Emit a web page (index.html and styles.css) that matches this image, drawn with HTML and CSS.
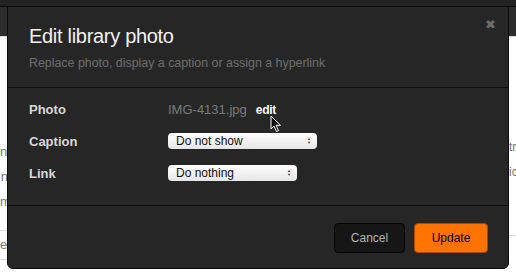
FILE: index.html
```html
<!DOCTYPE html>
<html lang="en">
<head>
    <meta charset="UTF-8">
    <meta name="viewport" content="width=device-width, initial-scale=1.0">
    <title>Edit library photo</title>
    <link rel="stylesheet" href="styles.css">
</head>
<body>
    <div class="topbar"></div>
    <div class="page">
        <div class="navbar"></div>
        <div class="content">
            <div class="side left">
                <div class="line">ne</div>
                <div class="line">n</div>
                <div class="line">m</div>
                <div class="row-sep">e0</div>
            </div>
            <div class="side right">
                <div class="line">tr</div>
                <div class="line">ic</div>
                <div class="row-sep"></div>
            </div>
        </div>
    </div>

    <div class="modal">
        <div class="modal-header">
            <span class="close">&#10006;</span>
            <div class="modal-title">Edit library photo</div>
            <div class="modal-sub">Replace photo, display a caption or assign a hyperlink</div>
        </div>

        <div class="modal-body">
            <div class="field">
                <div class="label">Photo</div>
                <div class="value">
                    <span class="filename">IMG-4131.jpg</span><span class="edit-link">edit</span>
                </div>
            </div>
            <div class="field">
                <div class="label">Caption</div>
                <div class="value">
                    <div class="select caption-select">
                        <span>Do not show</span>
                        <span class="arrows">&#9650;<br>&#9660;</span>
                    </div>
                </div>
            </div>
            <div class="field">
                <div class="label">Link</div>
                <div class="value">
                    <div class="select link-select">
                        <span>Do nothing</span>
                        <span class="arrows">&#9650;<br>&#9660;</span>
                    </div>
                </div>
            </div>
        </div>

        <div class="modal-footer">
            <button class="btn btn-cancel">Cancel</button>
            <button class="btn btn-update">Update</button>
        </div>

        <svg class="cursor" width="12" height="18" viewBox="0 0 12 18">
            <path d="M1 1 L1 14 L4 11 L6.5 16.5 L8.5 15.6 L6.2 10.3 L10.5 10.3 Z" fill="#111" stroke="#fff" stroke-width="1"/>
        </svg>
    </div>
</body>
</html>
```

FILE: styles.css
```css
body {
    margin: 0;
    font-family: 'Liberation Sans', Arial, sans-serif;
    background: #fff;
    width: 516px;
    height: 279px;
    overflow: hidden;
    position: relative;
}
.topbar {
    height: 6px;
    background: #222;
    border-bottom: 1px solid #0a0a0a;
}
.navbar {
    height: 29px;
    background: #2c2c2c;
    border-bottom: 1px solid #ddd;
}
.content {
    display: flex;
    justify-content: space-between;
    color: #777;
    font-size: 13px;
}
.side {
    width: 8px;
}
.side.right {
    width: 7px;
    font-size: 12px;
}
.left {
    padding-top: 102px;
}
.left .line {
    text-align: right;
}
.right {
    padding-top: 98px;
}
.line {
    height: 25px;
    line-height: 25px;
    white-space: nowrap;
}
.left .row-sep {
    margin-top: 16px;
    border-top: 1px solid #ddd;
    border-bottom: 1px solid #ddd;
    height: 28px;
    line-height: 28px;
    text-align: right;
}
.right .row-sep {
    margin-top: 50px;
    border-top: 1px solid #ddd;
}

.modal {
    position: absolute;
    left: 7px;
    top: 6px;
    width: 500px;
    background: #262626;
    border: 1px solid #0c0c0c;
    border-radius: 0 0 6px 6px;
    color: #ddd;
}
.modal-header {
    position: relative;
    padding: 18px 21px 16px;
    border-bottom: 1px solid #0e0e0e;
}
.close {
    position: absolute;
    right: 12px;
    top: 10px;
    color: #6d6d6d;
    font-family: 'DejaVu Sans', sans-serif;
    font-size: 13px;
    font-weight: bold;
}
.modal-title {
    font-size: 20px;
    color: #f2f2f2;
    line-height: 22px;
    letter-spacing: -0.3px;
}
.modal-sub {
    margin-top: 9px;
    font-size: 12.4px;
    color: #6e6e6e;
    line-height: 15px;
}
.modal-body {
    padding: 5px 21px 16px;
    border-bottom: 1px solid #0e0e0e;
}
.field {
    display: flex;
    align-items: center;
    height: 32px;
}
.label {
    width: 139px;
    font-size: 13px;
    font-weight: bold;
    color: #d8d8d8;
}
.filename {
    font-size: 13px;
    color: #7c7c7c;
}
.edit-link {
    margin-left: 9px;
    font-size: 12px;
    font-weight: bold;
    color: #fff;
    letter-spacing: -0.3px;
}
.select {
    display: flex;
    justify-content: space-between;
    align-items: center;
    height: 16px;
    padding: 0 6px 0 8px;
    background: linear-gradient(#ffffff, #e6e6e6);
    border-radius: 4px;
    font-size: 12px;
    color: #111;
    box-sizing: border-box;
}
.caption-select {
    width: 149px;
}
.link-select {
    width: 129px;
}
.arrows {
    font-size: 4px;
    line-height: 4px;
    color: #444;
    text-align: center;
}
.modal-footer {
    display: flex;
    justify-content: flex-end;
    gap: 9px;
    padding: 17px 20px 15px;
}
.btn {
    height: 30px;
    border-radius: 4px;
    font-family: 'Liberation Sans', Arial, sans-serif;
    font-size: 12px;
    cursor: pointer;
}
.btn-cancel {
    width: 71px;
    background: #161616;
    border: 1px solid #050505;
    color: #b5b5b5;
}
.btn-update {
    width: 74px;
    background: #ff7302;
    border: 1px solid #a84a00;
    color: #000;
}
.cursor {
    position: absolute;
    left: 262px;
    top: 108px;
}
```
